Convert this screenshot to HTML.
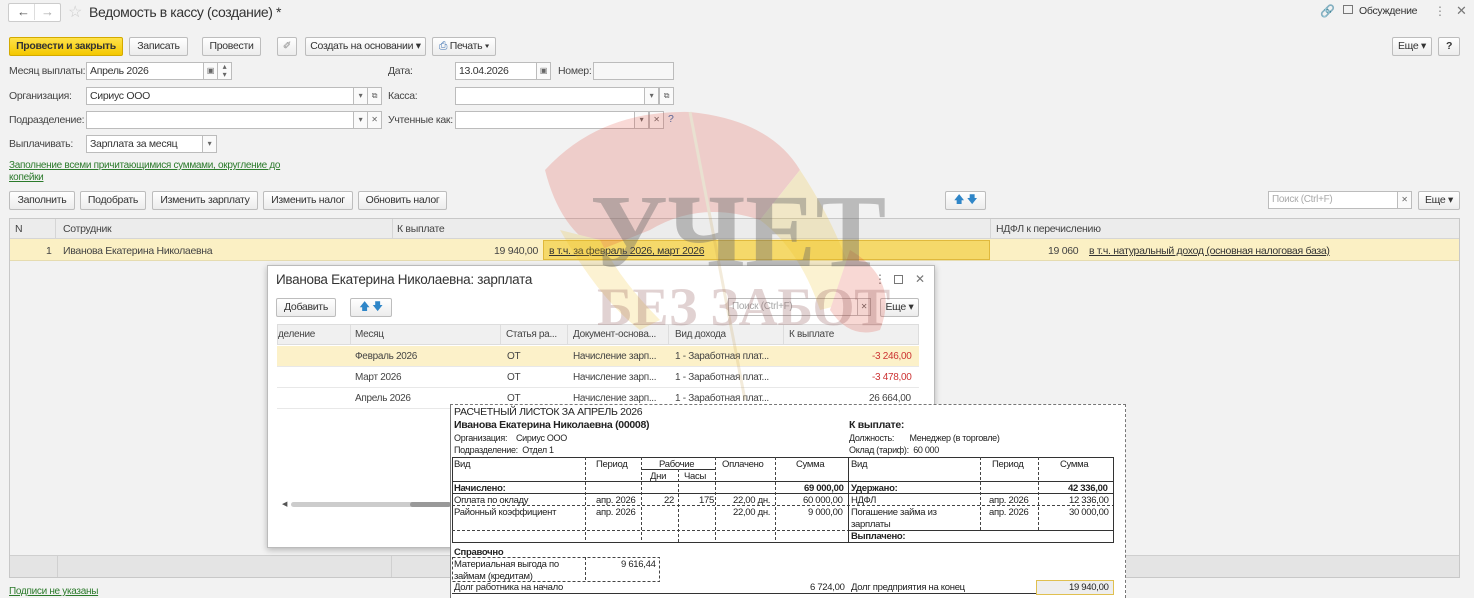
<!DOCTYPE html>
<html><head><meta charset="utf-8"><style>
*{box-sizing:border-box;margin:0;padding:0}
body{width:1474px;height:598px;overflow:hidden;background:#f2f2f2;font-family:"Liberation Sans",sans-serif;font-size:10.5px;letter-spacing:-0.3px;color:#333;position:relative}
.a{position:absolute;white-space:nowrap}
.btn{position:absolute;height:19px;border:1px solid #bdbdbd;border-radius:2px;background:linear-gradient(#fff,#ececec);text-align:center;line-height:17px;font-size:10.5px;color:#333;white-space:nowrap;overflow:hidden}
.inp{position:absolute;height:18px;border:1px solid #bcbcbc;background:#fff;line-height:16px;padding-left:3px;font-size:10.5px;white-space:nowrap;overflow:hidden}
.ib{position:absolute;height:18px;border:1px solid #bcbcbc;background:#fafafa;text-align:center;line-height:15px;font-size:8px;color:#666}
.lbl{position:absolute;font-size:10.5px;color:#444;white-space:nowrap}
.lnk{color:#2b7a2b;text-decoration:underline}
.ul{text-decoration:underline;color:#333}
.ps{font-size:9.5px;color:#222;letter-spacing:-0.3px}
</style></head><body>
<div class="a" style="left:8px;top:3px;width:53px;height:19px;border:1px solid #ccc;background:#fff;border-radius:2px"></div>
<div class="a" style="left:17px;top:4px;font-size:13px;color:#555">&#8592;</div>
<div class="a" style="left:34px;top:4px;width:1px;height:16px;background:#ddd"></div>
<div class="a" style="left:41px;top:4px;font-size:13px;color:#aaa">&#8594;</div>
<div class="a" style="left:68px;top:2px;font-size:16px;color:#ccc">&#9734;</div>
<div class="a" style="left:89px;top:4px;font-size:14px;letter-spacing:-0.4px;color:#333">Ведомость в кассу (создание) *</div>
<div class="a" style="left:1320px;top:4px;font-size:12px;color:#888">&#128279;</div>
<div class="a" style="left:1343px;top:5px;width:10px;height:9px;border:1px solid #777"></div>
<div class="a" style="left:1359px;top:5px;color:#333">Обсуждение</div>
<div class="a" style="left:1434px;top:4px;font-size:12px;color:#888">&#8942;</div>
<div class="a" style="left:1456px;top:3px;font-size:13px;color:#777">&#10005;</div>
<div class="btn" style="left:9px;top:37px;width:114px;background:linear-gradient(#ffe24a,#f4c800);border-color:#d3aa00;font-weight:bold;color:#333">Провести и закрыть</div>
<div class="btn" style="left:129px;top:37px;width:59px">Записать</div>
<div class="btn" style="left:202px;top:37px;width:59px">Провести</div>
<div class="btn" style="left:277px;top:37px;width:20px;color:#888">&#10000;</div>
<div class="btn" style="left:305px;top:37px;width:121px">Создать на основании &#9662;</div>
<div class="btn" style="left:432px;top:37px;width:64px"><span style="color:#3a6fb0">&#9113;</span> Печать &#9662;</div>
<div class="btn" style="left:1392px;top:37px;width:40px">Еще &#9662;</div>
<div class="btn" style="left:1438px;top:37px;width:22px;font-weight:bold">?</div>
<div class="lbl" style="left:9px;top:65px">Месяц выплаты:</div>
<div class="inp" style="left:86px;top:62px;width:118px">Апрель 2026</div>
<div class="ib" style="left:203px;top:62px;width:15px">&#9635;</div>
<div class="ib" style="left:217px;top:62px;width:15px;line-height:8px">&#9652;<br>&#9662;</div>
<div class="lbl" style="left:388px;top:65px">Дата:</div>
<div class="inp" style="left:455px;top:62px;width:82px">13.04.2026</div>
<div class="ib" style="left:536px;top:62px;width:15px">&#9635;</div>
<div class="lbl" style="left:558px;top:65px">Номер:</div>
<div class="inp" style="left:593px;top:62px;width:81px;background:#f7f7f7"></div>
<div class="lbl" style="left:9px;top:90px">Организация:</div>
<div class="inp" style="left:86px;top:87px;width:282px">Сириус ООО</div>
<div class="ib" style="left:353px;top:87px;width:15px">&#9662;</div>
<div class="ib" style="left:367px;top:87px;width:15px">&#10697;</div>
<div class="lbl" style="left:388px;top:90px">Касса:</div>
<div class="inp" style="left:455px;top:87px;width:205px"></div>
<div class="ib" style="left:644px;top:87px;width:15px">&#9662;</div>
<div class="ib" style="left:659px;top:87px;width:15px">&#10697;</div>
<div class="lbl" style="left:9px;top:114px">Подразделение:</div>
<div class="inp" style="left:86px;top:111px;width:282px"></div>
<div class="ib" style="left:353px;top:111px;width:15px">&#9662;</div>
<div class="ib" style="left:367px;top:111px;width:15px">&#10005;</div>
<div class="lbl" style="left:388px;top:114px">Учтенные как:</div>
<div class="inp" style="left:455px;top:111px;width:195px"></div>
<div class="ib" style="left:634px;top:111px;width:15px">&#9662;</div>
<div class="ib" style="left:649px;top:111px;width:15px">&#10005;</div>
<div class="lbl" style="left:668px;top:113px;color:#3a6fb0">?</div>
<div class="lbl" style="left:9px;top:138px">Выплачивать:</div>
<div class="inp" style="left:86px;top:135px;width:131px">Зарплата за месяц</div>
<div class="ib" style="left:202px;top:135px;width:15px">&#9662;</div>
<div class="a lnk" style="left:9px;top:160px;font-size:10px;line-height:12px">Заполнение всеми причитающимися суммами, округление до<br>копейки</div>
<div class="btn" style="left:9px;top:191px;width:66px">Заполнить</div>
<div class="btn" style="left:80px;top:191px;width:66px">Подобрать</div>
<div class="btn" style="left:152px;top:191px;width:106px">Изменить зарплату</div>
<div class="btn" style="left:263px;top:191px;width:90px">Изменить налог</div>
<div class="btn" style="left:358px;top:191px;width:89px">Обновить налог</div>
<div class="btn" style="left:945px;top:191px;width:41px;color:#2f86c8">&#129093; &#129095;</div>
<div class="inp" style="left:1268px;top:191px;width:130px;color:#aaa;font-size:10px">Поиск (Ctrl+F)</div>
<div class="ib" style="left:1397px;top:191px;width:15px">&#10005;</div>
<div class="btn" style="left:1418px;top:191px;width:42px">Еще &#9662;</div>
<div class="a" style="left:9px;top:218px;width:1451px;height:360px;border:1px solid #c8c8c8;background:#f2f2f2"></div>
<div class="a" style="left:10px;top:219px;width:1449px;height:20px;background:#ececec;border-bottom:1px solid #d5d5d5"></div>
<div class="a" style="left:55px;top:219px;width:1px;height:20px;background:#d5d5d5"></div>
<div class="a" style="left:392px;top:219px;width:1px;height:20px;background:#d5d5d5"></div>
<div class="a" style="left:990px;top:219px;width:1px;height:20px;background:#d5d5d5"></div>
<div class="lbl" style="left:15px;top:223px">N</div>
<div class="lbl" style="left:63px;top:223px">Сотрудник</div>
<div class="lbl" style="left:397px;top:223px">К выплате</div>
<div class="lbl" style="left:996px;top:223px">НДФЛ к перечислению</div>
<div class="a" style="left:10px;top:239px;width:1449px;height:22px;background:#fbf0c4;border-bottom:1px solid #e6dcb0"></div>
<div class="a" style="left:543px;top:240px;width:447px;height:20px;background:#f5d96a;border:1px solid #e0b93c"></div>
<div class="lbl" style="left:46px;top:245px">1</div>
<div class="lbl" style="left:63px;top:245px">Иванова Екатерина Николаевна</div>
<div class="lbl" style="left:494px;top:245px">19 940,00</div>
<div class="a ul" style="left:549px;top:245px">в т.ч. за февраль 2026, март 2026</div>
<div class="lbl" style="left:1048px;top:245px">19 060</div>
<div class="a ul" style="left:1089px;top:245px">в т.ч. натуральный доход (основная налоговая база)</div>
<div class="a" style="left:10px;top:555px;width:1449px;height:22px;background:#e4e4e4;border-top:1px solid #cfcfcf"></div>
<div class="a" style="left:57px;top:556px;width:1px;height:21px;background:#d0d0d0"></div>
<div class="a" style="left:391px;top:556px;width:1px;height:21px;background:#d0d0d0"></div>
<div class="a lnk" style="left:9px;top:586px;font-size:10px">Подписи не указаны</div>
<div class="a" style="left:267px;top:265px;width:668px;height:283px;background:#fff;border:1px solid #bbb;box-shadow:0 2px 6px rgba(0,0,0,.25)"></div>
<div class="a" style="left:276px;top:272px;font-size:13.5px;color:#333">Иванова Екатерина Николаевна: зарплата</div>
<div class="a" style="left:874px;top:272px;font-size:12px;color:#777">&#8942;</div>
<div class="a" style="left:894px;top:275px;width:9px;height:9px;border:1px solid #777"></div>
<div class="a" style="left:915px;top:272px;font-size:12px;color:#777">&#10005;</div>
<div class="btn" style="left:276px;top:298px;width:60px">Добавить</div>
<div class="btn" style="left:350px;top:298px;width:42px;color:#2f86c8">&#129093; &#129095;</div>
<div class="inp" style="left:728px;top:298px;width:130px;color:#aaa;font-size:10px">Поиск (Ctrl+F)</div>
<div class="ib" style="left:857px;top:298px;width:14px">&#10005;</div>
<div class="btn" style="left:880px;top:298px;width:39px">Еще &#9662;</div>
<div class="a" style="left:277px;top:324px;width:642px;height:21px;background:#f0f0f0;border:1px solid #ddd"></div>
<div class="a" style="left:350px;top:325px;width:1px;height:20px;background:#ddd"></div>
<div class="a" style="left:500px;top:325px;width:1px;height:20px;background:#ddd"></div>
<div class="a" style="left:567px;top:325px;width:1px;height:20px;background:#ddd"></div>
<div class="a" style="left:668px;top:325px;width:1px;height:20px;background:#ddd"></div>
<div class="a" style="left:783px;top:325px;width:1px;height:20px;background:#ddd"></div>
<div class="lbl" style="left:278px;top:329px;font-size:10px">деление</div>
<div class="lbl" style="left:355px;top:329px;font-size:10px">Месяц</div>
<div class="lbl" style="left:506px;top:329px;font-size:10px">Статья ра...</div>
<div class="lbl" style="left:573px;top:329px;font-size:10px">Документ-основа...</div>
<div class="lbl" style="left:675px;top:329px;font-size:10px">Вид дохода</div>
<div class="lbl" style="left:789px;top:329px;font-size:10px">К выплате</div>
<div class="a" style="left:277px;top:346px;width:642px;height:21px;background:#fcf1c9;border-bottom:1px solid #e8e8e8"></div>
<div class="a" style="left:277px;top:367px;width:642px;height:21px;border-bottom:1px solid #e8e8e8"></div>
<div class="a" style="left:277px;top:388px;width:642px;height:21px;border-bottom:1px solid #e8e8e8"></div>
<div class="lbl" style="left:355px;top:351px;font-size:10px">Февраль 2026</div>
<div class="lbl" style="left:507px;top:351px;font-size:10px">ОТ</div>
<div class="lbl" style="left:573px;top:351px;font-size:10px">Начисление зарп...</div>
<div class="lbl" style="left:675px;top:351px;font-size:10px">1 - Заработная плат...</div>
<div class="lbl" style="left:872px;top:351px;font-size:10px;color:#c33">-3 246,00</div>
<div class="lbl" style="left:355px;top:372px;font-size:10px">Март 2026</div>
<div class="lbl" style="left:507px;top:372px;font-size:10px">ОТ</div>
<div class="lbl" style="left:573px;top:372px;font-size:10px">Начисление зарп...</div>
<div class="lbl" style="left:675px;top:372px;font-size:10px">1 - Заработная плат...</div>
<div class="lbl" style="left:872px;top:372px;font-size:10px;color:#c33">-3 478,00</div>
<div class="lbl" style="left:355px;top:393px;font-size:10px">Апрель 2026</div>
<div class="lbl" style="left:507px;top:393px;font-size:10px">ОТ</div>
<div class="lbl" style="left:573px;top:393px;font-size:10px">Начисление зарп...</div>
<div class="lbl" style="left:675px;top:393px;font-size:10px">1 - Заработная плат...</div>
<div class="lbl" style="left:869px;top:393px;font-size:10px">26 664,00</div>
<div class="a" style="left:282px;top:500px;font-size:7px;color:#555">&#9664;</div>
<div class="a" style="left:291px;top:502px;width:160px;height:5px;border-radius:3px;background:#ccc"></div>
<div class="a" style="left:410px;top:502px;width:41px;height:5px;border-radius:3px;background:#999"></div>
<div class="a" style="left:450px;top:404px;width:676px;height:194px;background:#fff;border-top:1px dashed #777;border-left:1px solid #777;border-right:1px dashed #777"></div>
<div class="a" style="left:454px;top:406px;font-size:10.5px;color:#222">РАСЧЕТНЫЙ ЛИСТОК ЗА АПРЕЛЬ 2026</div>
<div class="a" style="left:454px;top:419px;font-size:10.5px;font-weight:bold;color:#222">Иванова Екатерина Николаевна (00008)</div>
<div class="a" style="left:849px;top:419px;font-size:10.5px;font-weight:bold;color:#222">К выплате:</div>
<div class="a ps" style="left:454px;top:433px;font-size:9px">Организация: &nbsp;&nbsp; Сириус ООО</div>
<div class="a ps" style="left:454px;top:445px;font-size:9px">Подразделение: &nbsp;Отдел 1</div>
<div class="a ps" style="left:849px;top:433px;font-size:9px">Должность: &nbsp;&nbsp;&nbsp;&nbsp;&nbsp;&nbsp;Менеджер (в торговле)</div>
<div class="a ps" style="left:849px;top:445px;font-size:9px">Оклад (тариф): &nbsp;60 000</div>
<svg class="a" style="left:0;top:0" width="1474" height="598">
<g stroke="#333" stroke-width="1" fill="none">
<rect x="452.5" y="457.5" width="661" height="85"/>
<line x1="452" y1="481.5" x2="1113" y2="481.5"/>
<line x1="452" y1="493.5" x2="1113" y2="493.5"/>
<line x1="848.5" y1="457" x2="848.5" y2="542"/>
<line x1="848" y1="530.5" x2="1113" y2="530.5"/>
<line x1="641" y1="469.5" x2="715" y2="469.5"/>
<line x1="452" y1="593.5" x2="1113" y2="593.5"/>
<rect x="1036.5" y="580.5" width="77" height="14" stroke="#e0c050" fill="#eee"/>
</g>
<g stroke="#444" stroke-width="1" stroke-dasharray="3,2" fill="none">
<line x1="452" y1="505.5" x2="1113" y2="505.5"/>
<line x1="452" y1="530.5" x2="848" y2="530.5"/>
<line x1="585.5" y1="457" x2="585.5" y2="542"/>
<line x1="641.5" y1="457" x2="641.5" y2="542"/>
<line x1="678.5" y1="469" x2="678.5" y2="542"/>
<line x1="715.5" y1="457" x2="715.5" y2="542"/>
<line x1="775.5" y1="457" x2="775.5" y2="542"/>
<line x1="980.5" y1="457" x2="980.5" y2="530"/>
<line x1="1038.5" y1="457" x2="1038.5" y2="530"/>
<rect x="452.5" y="557.5" width="207" height="24"/>
<line x1="585.5" y1="557" x2="585.5" y2="582"/>
</g>
</svg>
<div class="a ps" style="left:454px;top:459px">Вид</div>
<div class="a ps" style="left:596px;top:459px">Период</div>
<div class="a ps" style="left:659px;top:459px">Рабочие</div>
<div class="a ps" style="left:650px;top:471px">Дни</div>
<div class="a ps" style="left:684px;top:471px">Часы</div>
<div class="a ps" style="left:722px;top:459px">Оплачено</div>
<div class="a ps" style="left:796px;top:459px">Сумма</div>
<div class="a ps" style="left:851px;top:459px">Вид</div>
<div class="a ps" style="left:992px;top:459px">Период</div>
<div class="a ps" style="left:1060px;top:459px">Сумма</div>
<div class="a ps" style="left:454px;top:483px;font-weight:bold">Начислено:</div>
<div class="a ps" style="left:804px;top:483px;font-weight:bold">69 000,00</div>
<div class="a ps" style="left:851px;top:483px;font-weight:bold">Удержано:</div>
<div class="a ps" style="left:1068px;top:483px;font-weight:bold">42 336,00</div>
<div class="a ps" style="left:454px;top:495px">Оплата по окладу</div>
<div class="a ps" style="left:596px;top:495px">апр. 2026</div>
<div class="a ps" style="left:664px;top:495px">22</div>
<div class="a ps" style="left:699px;top:495px">175</div>
<div class="a ps" style="left:733px;top:495px">22,00 дн.</div>
<div class="a ps" style="left:803px;top:495px">60 000,00</div>
<div class="a ps" style="left:851px;top:495px">НДФЛ</div>
<div class="a ps" style="left:989px;top:495px">апр. 2026</div>
<div class="a ps" style="left:1069px;top:495px">12 336,00</div>
<div class="a ps" style="left:454px;top:507px">Районный коэффициент</div>
<div class="a ps" style="left:596px;top:507px">апр. 2026</div>
<div class="a ps" style="left:733px;top:507px">22,00 дн.</div>
<div class="a ps" style="left:808px;top:507px">9 000,00</div>
<div class="a ps" style="left:851px;top:507px;line-height:12px">Погашение займа из<br>зарплаты</div>
<div class="a ps" style="left:989px;top:507px">апр. 2026</div>
<div class="a ps" style="left:1069px;top:507px">30 000,00</div>
<div class="a ps" style="left:851px;top:531px;font-weight:bold">Выплачено:</div>
<div class="a ps" style="left:454px;top:547px;font-weight:bold">Справочно</div>
<div class="a ps" style="left:454px;top:559px;line-height:12px">Материальная выгода по<br>займам (кредитам)</div>
<div class="a ps" style="left:621px;top:559px">9 616,44</div>
<div class="a ps" style="left:454px;top:582px">Долг работника на начало</div>
<div class="a ps" style="left:810px;top:582px">6 724,00</div>
<div class="a ps" style="left:851px;top:582px">Долг предприятия на конец</div>
<div class="a ps" style="left:1069px;top:582px">19 940,00</div>
<svg class="a" style="left:0;top:0;pointer-events:none" width="1474" height="598">
<g opacity="0.2">
<path d="M545 170 Q600 110 690 112 Q770 120 800 170 L760 220 Q700 200 650 230 L600 250 Q560 230 545 170Z" fill="#e04030"/>
<path d="M560 230 Q600 300 640 330 L660 320 Q620 280 600 240Z" fill="#f0c020"/>
<path d="M800 170 Q840 230 860 300 L820 310 Q800 250 760 220Z" fill="#f0c020"/>
<path d="M850 250 Q900 280 880 330 Q850 340 830 310Z" fill="#e04030"/>
<line x1="690" y1="112" x2="745" y2="400" stroke="#c8a050" stroke-width="3"/>
</g>
<text x="590" y="266" font-family="Liberation Serif,serif" font-weight="bold" font-size="104" fill="#6a6a6a" opacity="0.4" textLength="296" lengthAdjust="spacingAndGlyphs">УЧЕТ</text>
<text x="597" y="325" font-family="Liberation Serif,serif" font-weight="bold" font-size="54" fill="#8a5050" opacity="0.25" textLength="293" lengthAdjust="spacingAndGlyphs">БЕЗ ЗАБОТ</text>
</svg>
</body></html>
